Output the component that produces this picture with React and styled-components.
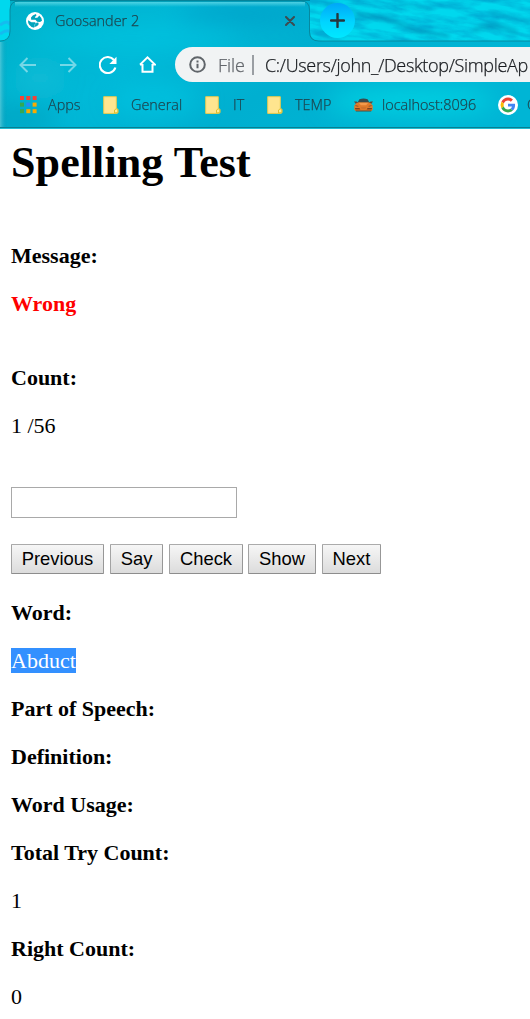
import React from "react";
import styled, { createGlobalStyle } from "styled-components";

const GlobalStyle = createGlobalStyle`
  * { box-sizing: border-box; }
  html, body { margin: 0; background: #fff; overflow: hidden; }
  svg { display: block; flex: none; }
`;

const Window = styled.div`
  width: 530px;
  height: 1019px;
  overflow: hidden;
  background: #fff;
`;

const Chrome = styled.header`
  position: relative;
  isolation: isolate;
  height: 129px;
  overflow: hidden;
  font-family: "Open Sans", "Noto Sans", sans-serif;
  background: #00b5d3;
`;

const Backdrop = styled.svg`
  position: absolute;
  inset: 0;
  z-index: -1;
`;

const TabStrip = styled.div`
  display: flex;
  align-items: center;
  height: 41px;
`;

const Tab = styled.div`
  display: flex;
  align-items: center;
  width: 310px;
  height: 41px;
  padding-left: 26px;
`;

const Label = styled.span`
  flex: none;
  width: ${(p) => p.$width}px;
  margin-left: ${(p) => p.$gap || 0}px;
  font-size: ${(p) => p.$size || 14.4}px;
  font-weight: 300;
  -webkit-text-stroke: 0.25px currentColor;
  letter-spacing: ${(p) => p.$spacing || 0}px;
  color: ${(p) => p.$color || "#1c4650"};
  line-height: 20px;
  white-space: nowrap;
`;

const CloseIcon = styled.svg`
  margin-left: 145px;
`;

const NewTab = styled.div`
  display: flex;
  align-items: center;
  justify-content: center;
  width: 35px;
  height: 35px;
  margin-left: 10px;
  border-radius: 50%;
  background: linear-gradient(#00a6f8, #00d5ff 55%, #00e8ff);
`;

const Toolbar = styled.div`
  display: flex;
  align-items: center;
  height: 47px;
  padding-left: 19px;
`;

const NavIcon = styled.svg`
  margin-right: ${(p) => p.$gap}px;
  opacity: ${(p) => (p.$dim ? 0.45 : 1)};
`;

const AddressBar = styled.div`
  display: flex;
  align-items: center;
  flex: none;
  width: 380px;
  height: 35px;
  padding-left: 14px;
  border-radius: 18px 0 0 18px;
  background: #f1f3f4;
`;

const Divider = styled.span`
  width: 2px;
  height: 20px;
  margin-left: 8px;
  background: #9a9ea3;
`;

const Bookmarks = styled.nav`
  display: flex;
  align-items: center;
  height: 33px;
  padding-left: 20px;
`;

const BookmarkIcon = styled.span`
  display: flex;
  flex: none;
  margin-left: ${(p) => p.$gap || 0}px;
`;

const Page = styled.main`
  padding: 9px 11px 0;
  font-family: "Liberation Serif", "Times New Roman", serif;
  font-size: 22px;
  line-height: 25px;
  color: #000;
`;

const Title = styled.h1`
  margin: 0 0 55px;
  font-size: 44px;
  line-height: 50px;
  font-weight: 700;
  letter-spacing: 0.1px;
  white-space: nowrap;
`;

const Line = styled.p`
  margin: 0 0 ${(p) => p.$after || 23}px;
  font-weight: ${(p) => (p.$bold ? 700 : 400)};
  color: ${(p) => p.$color || "#000"};
`;

const Selected = styled.span`
  display: inline-block;
  height: 25px;
  color: #fff;
  background: #3390ff;
`;

const Answer = styled.input`
  display: block;
  width: 226px;
  height: 31px;
  margin: 0 0 26px;
  padding: 1px;
  border: 1px solid #a9a9a9;
  border-radius: 0;
  outline: none;
`;

const Buttons = styled.div`
  display: flex;
  margin-bottom: 26px;
`;

const Button = styled.button`
  width: ${(p) => p.$width}px;
  height: 30px;
  margin: 0 ${(p) => p.$gap ?? 6}px 0 0;
  padding: 0 0 1px;
  border: 1px solid;
  border-color: #ababab #979797 #8d8d8d #a3a3a3;
  border-radius: 1px;
  background: linear-gradient(#f6f6f6, #dcdcdc);
  font: 18.4px/26px "Liberation Sans", Arial, sans-serif;
  color: #000;
  white-space: nowrap;
`;

const Folder = () => (
  <svg width="16" height="18" viewBox="0 0 16 18">
    <path d="M.7.7h12.6v11.8l1.6.7v3.6l-1.2.6H.7z" fill="#ffe58f" stroke="#e8cb4e" />
    <path d="M11.5 17v-3l1.7-1.2 1.6.8v3z" fill="#ffec98" stroke="#e0be30" />
  </svg>
);

const appColors = ["#f44336", "#f44336", "#f44336", "#34a853", "#268bf5", "#f9ab00", "#34a853", "#f9ab00", "#f9ab00"];
const AppsIcon = () => (
  <svg width="17" height="18" viewBox="0 0 17 18">
    {appColors.map((c, i) => (
      <rect key={i} x={(i % 3) * 6.3} y={Math.floor(i / 3) * 6.6} width="4" height="4" fill={c} />
    ))}
  </svg>
);

const Car = () => (
  <svg width="19" height="14" viewBox="0 0 19 14">
    <path d="M3.6 4.5 5.4 1.2Q9.5-.4 13.6 1.2l1.8 3.3z" fill="#3a4a4c" />
    <path d="M0 3.4h2.5l1.5 1h11l1.5-1H19l-1.6 2.4H1.6z" fill="#5a4a3e" />
    <path d="M.3 7.6Q2 4.4 5 4.2h9q3 .2 4.7 3.4v3.6l-1.2 1.8h-16L.3 11.2z" fill="#e07a2a" />
    <path d="M5 4.9h9l-1.8 2.4H6.8z" fill="#f59a4c" />
    <path d="M1.4 7l3.4.9-.8.8-2.6-.6zM17.6 7l-3.4.9.8.8 2.6-.6z" fill="#8c5a35" />
    <path d="M1 10h4.4l1 1.6H1.4zM18 10h-4.4l-1 1.6h5z" fill="#7c421d" />
    <path d="M7 9.6h5l-.6 1H7.6z" fill="#c06a2c" />
    <path d="M1.4 12.4h16.2l-.6 1.2H2z" fill="#4c4a40" />
  </svg>
);

const GoogleIcon = () => (
  <svg width="20" height="20" viewBox="0 0 20 20">
    <circle cx="10" cy="10" r="10" fill="#fff" />
    <g transform="translate(2.6 2.6) scale(.308)">
      <path fill="#ea4335" d="M24 9.5c3.5 0 6.7 1.2 9.2 3.6l6.9-6.9C35.9 2.4 30.5 0 24 0 14.6 0 6.5 5.4 2.6 13.2l8 6.2C12.4 13.7 17.7 9.5 24 9.5z" />
      <path fill="#4285f4" d="M47 24.6c0-1.6-.2-3.1-.4-4.6H24v9h12.9c-.6 3-2.3 5.5-4.8 7.2l7.7 6C44.4 38 47 31.8 47 24.6z" />
      <path fill="#fbbc05" d="M10.5 28.6a14.5 14.5 0 0 1 0-9.2l-8-6.2a24 24 0 0 0 0 21.6z" />
      <path fill="#34a853" d="M24 48c6.5 0 11.9-2.1 15.9-5.8l-7.7-6c-2.2 1.4-4.9 2.3-8.2 2.3-6.3 0-11.6-4.2-13.5-9.9l-8 6.2C6.5 42.6 14.6 48 24 48z" />
    </g>
  </svg>
);

const Globe = () => (
  <svg width="18" height="18" viewBox="0 0 18 18">
    <circle cx="9" cy="9" r="9" fill="#fff" />
    <path
      d="M2 8.2 5.4 10.2H9L10 11.4 8.4 12.8 8.2 15.8Q5 15.4 3.2 12.8 1.8 10.6 2 8.2ZM10 2 6.8 3.4 5 5.6 5.2 7.8H9.4L11.2 9.8 14 10 16 8.8Q15.8 5.4 13.2 3.4L11.8 5.4 9.6 6 8.8 5 10.4 3.8Z"
      fill="#00a4bc"
    />
    <path d="M10.8 10.4 12.6 10.8 12.4 13 10.2 14.6 8.2 15 8.6 13Z" fill="#00a4bc" />
  </svg>
);

const Water = () => (
  <Backdrop width="530" height="129" viewBox="0 0 530 129">
    <defs>
      <linearGradient id="base" x1="0" y1="0" x2="1" y2=".3">
        <stop offset="0" stopColor="#00b0c8" />
        <stop offset=".35" stopColor="#00b9d8" />
        <stop offset=".65" stopColor="#00afd0" />
        <stop offset="1" stopColor="#00b5d5" />
      </linearGradient>
      <linearGradient id="shine" x1="0" y1="0" x2="0" y2="1">
        <stop offset="0" stopColor="#80e7ef" stopOpacity=".6" />
        <stop offset="1" stopColor="#80e7ef" stopOpacity="0" />
      </linearGradient>
      <linearGradient id="edge">
        <stop offset="0" stopColor="#65cedc" stopOpacity=".7" />
        <stop offset="1" stopColor="#0098b6" stopOpacity="0" />
      </linearGradient>
      <filter id="soft" x="-50%" y="-150%" width="200%" height="400%"><feGaussianBlur stdDeviation="12" /></filter>
      <filter id="haze" x="-20%" y="-100%" width="140%" height="300%"><feGaussianBlur stdDeviation="2.2" /></filter>
      <filter id="ripples" x="0" y="0" width="100%" height="100%" colorInterpolationFilters="sRGB">
        <feTurbulence type="fractalNoise" baseFrequency=".03 .13" numOctaves="4" seed="7" />
        <feColorMatrix values="0 0 0 0 0  0 0 0 0 .62  0 0 0 0 .8  0 2.4 0 0 -.85" />
      </filter>
      <clipPath id="stripClip"><path d="M310 0H530V41H319Q310 41 310 30ZM0 0H10V30Q10 41 0 41Z" /></clipPath>
    </defs>
    <rect width="530" height="129" fill="url(#base)" />
    <g filter="url(#soft)">
      <ellipse cx="130" cy="38" rx="110" ry="10" fill="#00c7e2" opacity=".7" />
      <ellipse cx="40" cy="78" rx="24" ry="10" fill="#25c3dc" opacity=".65" />
      <ellipse cx="410" cy="101" rx="85" ry="13" fill="#00d2e2" />
      <ellipse cx="155" cy="100" rx="45" ry="16" fill="#00c8e4" opacity=".6" />
      <ellipse cx="15" cy="120" rx="48" ry="14" fill="#009bb9" opacity=".6" />
      <ellipse cx="245" cy="13" rx="70" ry="10" fill="#009bc4" opacity=".75" />
    </g>
    <g clipPath="url(#stripClip)">
      <rect width="530" height="41" fill="#00d8ee" />
      <g transform="rotate(9 420 20)"><rect x="290" y="-50" width="270" height="140" filter="url(#ripples)" opacity=".75" /></g>
      <g filter="url(#haze)" stroke="#007fa8" fill="none" strokeLinecap="round">
        <path d="M358 14Q388 17 416 31L448 36" strokeWidth="4" opacity=".5" />
        <path d="M475 30Q494 21 515 32" strokeWidth="6" opacity=".4" />
        <path d="M400 4L430 10" strokeWidth="3" opacity=".3" />
        <path d="M490 12L530 22" strokeWidth="3" opacity=".3" />
      </g>
      <path d="M0 25Q8 19 10 25M0 34Q7 29 10 32" stroke="#1db1ef" strokeWidth="3" fill="none" opacity=".7" />
    </g>
    <rect x="15" y="2" width="290" height="5" fill="url(#shine)" />
    <path d="M10 .5H310" stroke="#00869d" strokeWidth="1" />
    <path d="M0 41Q10 41 10 31V10Q10 1 19 1H301Q309.5 1 309.5 10V32Q309.5 41 319 41H530" fill="none" stroke="#077f93" strokeOpacity=".8" />
    <rect y="42" width="7" height="86" fill="url(#edge)" />
    <rect y="127" width="530" height="1" fill="#087f91" />
    <rect y="128" width="530" height="1" fill="#20bdd2" />
  </Backdrop>
);

const Arrow = ({ gap, flip }) => (
  <NavIcon $gap={gap} $dim width="17" height="16" viewBox="0 0 17 16" fill="none" stroke="#fff" strokeWidth="2">
    <path d={flip ? "M0 8h15M8.5 1l7 7-7 7" : "M17 8H2M8.5 1l-7 7 7 7"} />
  </NavIcon>
);

const results = [
  ["Part of Speech:", true],
  ["Definition:", true],
  ["Word Usage:", true],
  ["Total Try Count:", true],
  ["1", false],
  ["Right Count:", true],
  ["0", false],
];

export default function App() {
  return (
    <Window>
      <GlobalStyle />
      <Chrome>
        <Water />
        <TabStrip>
          <Tab>
            <Globe />
            <Label $gap={11} $width={85} $spacing={0}>Goosander 2</Label>
            <CloseIcon width="10" height="10" viewBox="0 0 10 10" stroke="#3d4b50" strokeWidth="2" strokeLinecap="round">
              <path d="M1 1l8 8M9 1 1 9" />
            </CloseIcon>
          </Tab>
          <NewTab>
            <svg width="15" height="15" viewBox="0 0 15 15" stroke="#27363d" strokeWidth="2.4" strokeLinecap="round">
              <path d="M7.5 1v13M1 7.5h13" />
            </svg>
          </NewTab>
        </TabStrip>
        <Toolbar>
          <Arrow gap={24} />
          <Arrow gap={22} flip />
          <NavIcon $gap={22} width="18" height="18" viewBox="0 0 18 18" fill="none">
            <path d="M15 4A8 8 0 1 0 16.4 11.5" stroke="#fff" strokeWidth="2.1" />
            <path d="M17.5.8v7.1h-7.1z" fill="#fff" />
          </NavIcon>
          <NavIcon $gap={19} width="17" height="17" viewBox="0 0 17 17" fill="none" stroke="#fff" strokeWidth="2">
            <path d="M3.5 8v7.8h10V8M1 8.6 8.5 1.4 16 8.6h-2.5M1 8.6h2.5" />
          </NavIcon>
          <AddressBar>
            <svg width="17" height="17" viewBox="0 0 17 17" fill="none" stroke="#60656a" strokeWidth="2">
              <circle cx="8.5" cy="8.5" r="7.3" />
              <path d="M8.5 7.7v4.5M8.5 4.4v2" />
            </svg>
            <Label $gap={12} $width={26} $size={18} $spacing={-0.1} $color="#63676c">File</Label>
            <Divider />
            <Label $gap={11} $width={264} $size={18} $spacing={-0.32} $color="#181b1f">C:/Users/john_/Desktop/SimpleAp</Label>
          </AddressBar>
        </Toolbar>
        <Bookmarks>
          <AppsIcon />
          <Label $gap={11} $width={33}>Apps</Label>
          <BookmarkIcon $gap={22}><Folder /></BookmarkIcon>
          <Label $gap={12} $width={51}>General</Label>
          <BookmarkIcon $gap={23}><Folder /></BookmarkIcon>
          <Label $gap={12} $width={12}>IT</Label>
          <BookmarkIcon $gap={22}><Folder /></BookmarkIcon>
          <Label $gap={12} $width={38}>TEMP</Label>
          <BookmarkIcon $gap={21}><Car /></BookmarkIcon>
          <Label $gap={9} $width={96}>localhost:8096</Label>
          <BookmarkIcon $gap={20}><GoogleIcon /></BookmarkIcon>
          <Label $gap={9} $width={12}>G</Label>
        </Bookmarks>
      </Chrome>
      <Page>
        <Title>Spelling Test</Title>
        <Line $bold>Message:</Line>
        <Line $bold $color="#ff0000" $after={49}>Wrong</Line>
        <Line $bold>Count:</Line>
        <Line $after={49}>1 /56</Line>
        <Answer aria-label="Spelling" />
        <Buttons>
          <Button $width={93}>Previous</Button>
          <Button $width={53}>Say</Button>
          <Button $width={74} $gap={5}>Check</Button>
          <Button $width={68}>Show</Button>
          <Button $width={59}>Next</Button>
        </Buttons>
        <Line $bold>Word:</Line>
        <Line><Selected>Abduct</Selected></Line>
        {results.map(([text, bold]) => (
          <Line key={text} $bold={bold}>{text}</Line>
        ))}
      </Page>
    </Window>
  );
}
